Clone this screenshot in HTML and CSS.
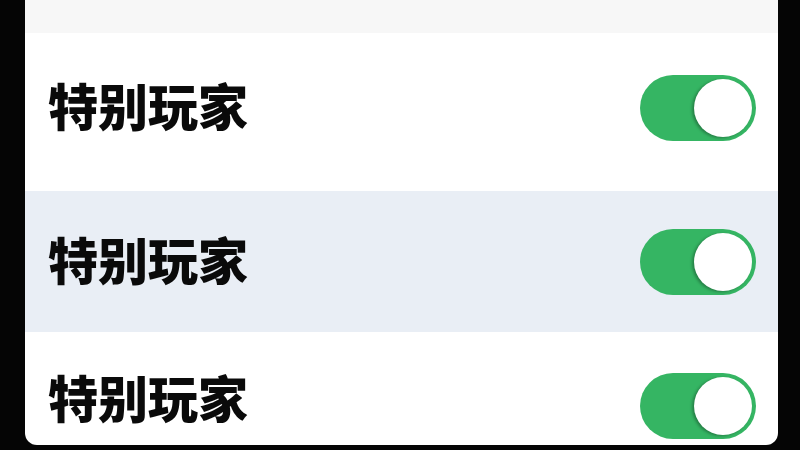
FILE: index.html
```html
<!DOCTYPE html>
<html lang="zh">

<head>
    <meta charset="UTF-8">
    <meta name="viewport" content="width=device-width, initial-scale=1.0">
    <title>设置</title>
    <link rel="stylesheet" href="styles.css">
</head>

<body>
    <div class="screen">
        <div class="topbar"></div>
        <div class="row row1">
            <span class="label">特别玩家</span>
            <div class="switch on"><div class="knob"></div></div>
        </div>
        <div class="row row2">
            <span class="label">特别玩家</span>
            <div class="switch on"><div class="knob"></div></div>
        </div>
        <div class="row row3">
            <span class="label">特别玩家</span>
            <div class="switch on"><div class="knob"></div></div>
        </div>
    </div>
</body>

</html>
```

FILE: styles.css
```css
html,
body {
    margin: 0;
    height: 100%;
    background-color: #050505;
    overflow: hidden;
}

.screen {
    margin-left: 25px;
    width: 753px;
    height: 445px;
    background-color: #ffffff;
    border-radius: 0 0 12px 12px;
    overflow: hidden;
    display: flex;
    flex-direction: column;
}

.topbar {
    height: 33px;
    background-color: #f7f7f7;
}

.row {
    display: flex;
    align-items: center;
    justify-content: space-between;
    padding-left: 23px;
    padding-right: 22px;
    box-sizing: border-box;
}

.row1 {
    height: 158px;
    padding-bottom: 8px;
}

.row2 {
    height: 141px;
    background-color: #e9eef5;
}

.row3 {
    flex: 1;
    align-items: flex-start;
    padding-top: 41px;
}

.label {
    font-family: "Noto Sans CJK SC", "Noto Sans", sans-serif;
    font-weight: 900;
    font-size: 50px;
    color: #0a0a0a;
    line-height: 1;
    margin-top: -8px;
}

.row3 .label {
    margin-top: 0;
    position: relative;
    top: -2px;
}

.switch {
    width: 116px;
    height: 66px;
    border-radius: 33px;
    background-color: #35b563;
    position: relative;
    box-sizing: border-box;
}

.knob {
    position: absolute;
    top: 4px;
    right: 4px;
    width: 58px;
    height: 58px;
    border-radius: 50%;
    background-color: #ffffff;
    box-shadow: -2px 1px 3px rgba(0, 0, 0, 0.3);
}
```
